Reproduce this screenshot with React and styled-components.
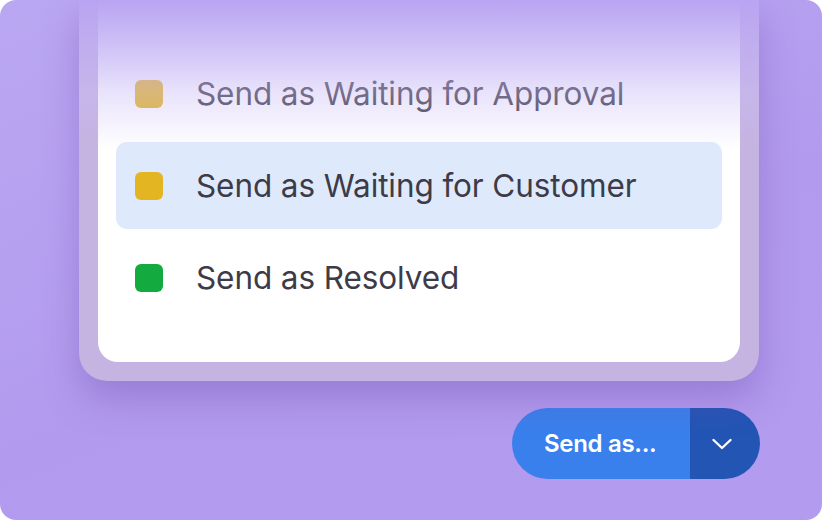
import React from 'react';
import styled, { createGlobalStyle } from 'styled-components';

const GlobalStyle = createGlobalStyle`
  html, body {
    margin: 0;
    padding: 0;
    background: #ffffff;
  }
  body {
    font-family: Inter, "Noto Sans", "Liberation Sans", sans-serif;
  }
`;

// Lavender canvas with rounded corners
const Canvas = styled.div`
  width: 822px;
  height: 520px;
  border-radius: 16px;
  overflow: hidden;
  background: linear-gradient(160deg, #baa7f2 0%, #b29bee 55%, #b39bef 100%);
  display: flex;
  flex-direction: column;
`;

// Translucent frame around the menu card
const Frame = styled.div`
  position: relative;
  margin-left: 79px;
  width: 680px;
  height: 381px;
  box-sizing: border-box;
  padding: 0 19px 19px;
  background: #c5b3e1;
  border-radius: 0 0 28px 28px;
  box-shadow: 0 18px 36px rgba(110, 70, 170, 0.35);
`;

const Panel = styled.div`
  height: 100%;
  box-sizing: border-box;
  background: #ffffff;
  border-radius: 0 0 20px 20px;
  padding: 50px 18px 0;
  display: flex;
  flex-direction: column;
  gap: 5px;
`;

// Fade that melts the top of the card into the background
const TopFade = styled.div`
  position: absolute;
  left: 0;
  right: 0;
  top: 0;
  height: 150px;
  pointer-events: none;
  background: linear-gradient(
    180deg,
    rgba(184, 164, 242, 1) 0%,
    rgba(190, 172, 243, 0.75) 30%,
    rgba(200, 186, 245, 0.4) 62%,
    rgba(230, 222, 250, 0) 100%
  );
`;

const Row = styled.div`
  height: 87px;
  display: flex;
  align-items: center;
  padding-left: 19px;
  border-radius: 11px;
  background: ${(p) => (p.$active ? '#deeafc' : 'transparent')};
`;

const Swatch = styled.span`
  width: 28px;
  height: 28px;
  border-radius: 6px;
  background: ${(p) => p.$color};
  flex-shrink: 0;
`;

const Label = styled.span`
  margin-left: 33px;
  font-size: 31.5px;
  color: #3d3b47;
  letter-spacing: -0.1px;
`;

const ButtonRow = styled.div`
  display: flex;
  justify-content: flex-end;
  padding-right: 62px;
  margin-top: 27px;
`;

const SplitButton = styled.div`
  display: flex;
  height: 71px;
  border-radius: 36px;
  overflow: hidden;
`;

const MainPart = styled.div`
  width: 178px;
  display: flex;
  align-items: center;
  padding-left: 32px;
  box-sizing: border-box;
  background: #3a80ed;
  color: #ffffff;
  font-size: 24px;
  font-weight: 600;
  letter-spacing: -0.3px;
`;

const ArrowPart = styled.div`
  width: 70px;
  display: flex;
  align-items: center;
  justify-content: center;
  padding-right: 6px;
  box-sizing: border-box;
  background: #2355b5;
`;

const items = [
  { label: 'Send as Waiting for Approval', color: '#e4b523' },
  { label: 'Send as Waiting for Customer', color: '#e4b523', active: true },
  { label: 'Send as Resolved', color: '#13ab3f' },
];

export default function App() {
  return (
    <>
      <GlobalStyle />
      <Canvas>
        <Frame>
          <Panel>
            {items.map((it) => (
              <Row key={it.label} $active={it.active}>
                <Swatch $color={it.color} />
                <Label>{it.label}</Label>
              </Row>
            ))}
          </Panel>
          <TopFade />
        </Frame>
        <ButtonRow>
          <SplitButton>
            <MainPart>Send as...</MainPart>
            <ArrowPart>
              <svg width="22" height="14" viewBox="0 0 22 14" fill="none" stroke="#ffffff" strokeWidth="2.4" strokeLinecap="round" strokeLinejoin="round">
                <path d="M2.5 3L11 11L19.5 3" />
              </svg>
            </ArrowPart>
          </SplitButton>
        </ButtonRow>
      </Canvas>
    </>
  );
}
